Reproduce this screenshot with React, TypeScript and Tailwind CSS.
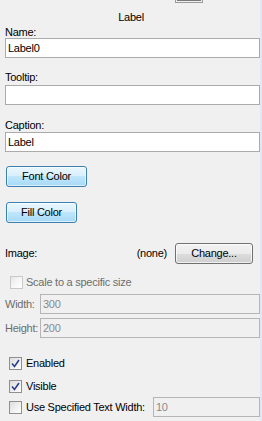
import React from 'react';

const font = { fontFamily: '"Liberation Sans", Arial, sans-serif' };

const Check: React.FC<{ checked?: boolean; disabled?: boolean }> = ({ checked, disabled }) => (
  <div
    className={`w-[13px] h-[13px] shrink-0 border flex items-center justify-center ${
      disabled ? 'border-[#c8c8c8] bg-[linear-gradient(135deg,#e6e6e6_0%,#f6f6f6_50%,#ffffff_100%)]' : 'border-[#8e8f8f] bg-[linear-gradient(135deg,#dcdcdc_0%,#f2f2f2_60%,#ffffff_100%)]'
    }`}
  >
    {checked && (
      <svg width="9" height="9" viewBox="0 0 9 9">
        <path d="M1 4.5 L3.5 7.5 L8 1" fill="none" stroke="#2b3f8c" strokeWidth="1.6" />
      </svg>
    )}
  </div>
);

const Field: React.FC<{ value?: string; disabled?: boolean; className?: string }> = ({ value, disabled, className }) => (
  <div
    className={`border flex items-center px-[2px] text-[11px] ${
      disabled ? 'border-[#b5b5b5] bg-[#f0f0f0] text-[#8a8a8a]' : 'border-[#ababab] bg-white text-black'
    } ${className ?? ''}`}
  >
    {value}
  </div>
);

const BlueButton: React.FC<{ label: string; w: string }> = ({ label, w }) => (
  <div
    className={`${w} h-[21px] rounded-[3px] border border-[#3c7fb1] bg-[linear-gradient(#eaf6fd_0%,#d9f0fc_45%,#bee6fd_50%,#a7d9f5_100%)] flex items-center justify-center text-[11px] text-black shadow-[inset_0_0_0_1px_rgba(255,255,255,0.6)]`}
  >
    {label}
  </div>
);

export default function App() {
  return (
    <div className="w-[262px] h-[421px] bg-[#f0f0f0] flex overflow-hidden" style={font}>
      <div className="w-[260px] flex flex-col text-[11px] leading-[13px] tracking-[-0.25px] text-black whitespace-nowrap">
        {/* clipped control above */}
        <div className="ml-[175px] w-[28px] h-[3px] border-x border-b border-[#9a9a9a] flex px-[1px] pb-[1px]">
          <div className="flex-1 bg-[#7a7a7a]" />
        </div>

        <div className="mt-[8px] text-center pl-[2px]">Label</div>

        <div className="mt-[2px] pl-[5px]">Name:</div>
        <Field value="Label0" className="ml-[5px] mt-[-1px] h-[20px]" />

        <div className="mt-[13px] pl-[5px] h-[13px]">Tooltip:</div>
        <Field className="ml-[5px] mt-[1px] h-[20px]" />

        <div className="mt-[14px] pl-[5px]">Caption:</div>
        <Field value="Label" className="ml-[5px] h-[20px]" />

        <div className="mt-[14px] pl-[6px]">
          <BlueButton label="Font Color" w="w-[81px]" />
        </div>
        <div className="mt-[15px] pl-[6px]">
          <BlueButton label="Fill Color" w="w-[71px]" />
        </div>

        <div className="mt-[20px] flex items-center pl-[5px] h-[21px]">
          <span className="flex-1">Image:</span>
          <span className="mr-[8px]">(none)</span>
          <div className="w-[78px] h-[21px] mr-[7px] rounded-[3px] border border-[#707070] bg-[linear-gradient(#f2f2f2_0%,#ebebeb_50%,#dddddd_51%,#cfcfcf_100%)] flex items-center justify-center shadow-[inset_0_0_0_1px_rgba(255,255,255,0.7)]">
            Change...
          </div>
        </div>

        <div className="mt-[12px] flex items-center pl-[10px] gap-[3px] text-[#6d6d6d]">
          <Check disabled />
          <span>Scale to a specific size</span>
        </div>

        <div className="mt-[5px] flex items-center pl-[5px] text-[#6d6d6d]">
          <span className="w-[35px]">Width:</span>
          <Field value="300" disabled className="flex-1 h-[20px]" />
        </div>
        <div className="mt-[4px] flex items-center pl-[5px] text-[#6d6d6d]">
          <span className="w-[35px]">Height:</span>
          <Field value="200" disabled className="flex-1 h-[20px]" />
        </div>

        <div className="mt-[19px] flex items-center pl-[9px] gap-[4px]">
          <Check checked />
          <span>Enabled</span>
        </div>
        <div className="mt-[10px] flex items-center pl-[9px] gap-[4px]">
          <Check checked />
          <span>Visible</span>
        </div>
        <div className="mt-[4px] flex items-center pl-[9px] gap-[4px]">
          <Check />
          <span>Use Specified Text Width:</span>
          <Field value="10" disabled className="ml-auto w-[107px] h-[20px] shrink-0" />
        </div>
      </div>
      <div className="w-[2px] bg-[#dfe9f5]" />
    </div>
  );
}
